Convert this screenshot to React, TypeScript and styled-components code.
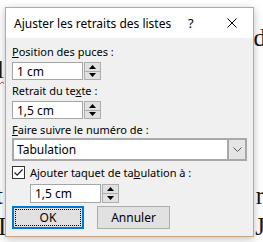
import React from "react";
import styled, { createGlobalStyle } from "styled-components";

const Global = createGlobalStyle`
  html, body { margin: 0; padding: 0; background: #ffffff; overflow: hidden; }
  body { width: 263px; height: 242px; }
`;

const Page = styled.div`
  position: relative;
  width: 263px;
  height: 242px;
  overflow: hidden;
  background: #fff;
`;

const Document = styled.div`
  display: flex;
  flex-direction: column;
  padding-top: 22px;
  font-family: "Liberation Serif", serif;
  font-size: 25px;
  color: #1a1a1a;
`;

const DocLine = styled.div`
  height: 31.5px;
  line-height: 31.5px;
  display: flex;
  justify-content: space-between;
  overflow: hidden;
`;

const LeftFrag = styled.span<{ $shift: number; $squiggle?: boolean }>`
  margin-left: ${(p) => p.$shift}px;
  text-decoration: ${(p) => (p.$squiggle ? "underline wavy #e02020" : "none")};
  text-decoration-thickness: 1px;
  text-underline-offset: 3px;
`;

const RightFrag = styled.span<{ $shift: number }>`
  margin-right: ${(p) => p.$shift}px;
`;

const Dialog = styled.div`
  position: absolute;
  left: 5px;
  top: 7px;
  width: 247px;
  height: 228px;
  border: 1px solid #c9a67f;
  background: #f0f0f0;
  box-shadow: 0 2px 8px rgba(0, 0, 0, 0.25);
  display: flex;
  flex-direction: column;
  font-family: "Noto Sans", sans-serif;
  font-size: 11px;
  color: #000;
`;

const TitleBar = styled.div`
  height: 30px;
  background: #fff;
  display: flex;
  align-items: center;
`;

const Title = styled.div`
  flex: 1;
  padding-left: 8px;
  font-size: 12px;
  white-space: nowrap;
`;

const TitleButton = styled.div<{ $w: number }>`
  width: ${(p) => p.$w}px;
  height: 30px;
  display: flex;
  align-items: center;
  justify-content: center;
  font-size: 13px;
`;

const Body = styled.div`
  display: flex;
  flex-direction: column;
  padding: 6px 6px 0 6px;
`;

const Label = styled.div<{ $mt?: number }>`
  height: 16px;
  line-height: 16px;
  margin-top: ${(p) => p.$mt ?? 0}px;
  white-space: nowrap;
`;

const SpinRow = styled.div<{ $ml?: number; $mt?: number }>`
  display: flex;
  gap: 1px;
  margin-left: ${(p) => p.$ml ?? 0}px;
  margin-top: ${(p) => p.$mt ?? 0}px;
`;

const TextBox = styled.div<{ $h: number }>`
  box-sizing: border-box;
  width: 71px;
  height: ${(p) => p.$h}px;
  border: 1px solid #a5a5a5;
  background: #fff;
  padding-left: 4px;
  font-size: 12px;
  display: flex;
  align-items: center;
`;

const Spinner = styled.div`
  display: flex;
  flex-direction: column;
  width: 17px;
`;

const SpinButton = styled.div`
  flex: 1;
  box-sizing: border-box;
  border: 1px solid #adadad;
  background: #e1e1e1;
  display: flex;
  align-items: center;
  justify-content: center;
  & + & { border-top: none; }
`;

const Select = styled.div`
  box-sizing: border-box;
  width: 235px;
  height: 23px;
  border: 2px solid #a8a8a8;
  background: #fff;
  display: flex;
  align-items: stretch;
`;

const SelectValue = styled.div`
  flex: 1;
  padding-left: 3px;
  font-size: 12px;
  display: flex;
  align-items: center;
`;

const SelectButton = styled.div`
  width: 16px;
  border-left: 2px solid #a8a8a8;
  background: #e5e5e5;
  display: flex;
  align-items: center;
  justify-content: center;
`;

const CheckRow = styled.div`
  display: flex;
  align-items: center;
  gap: 5px;
  margin-top: 3px;
  height: 16px;
`;

const CheckBox = styled.div`
  box-sizing: border-box;
  width: 13px;
  height: 13px;
  border: 1px solid #333;
  background: #fff;
  display: flex;
  align-items: center;
  justify-content: center;
`;

const ButtonRow = styled.div`
  display: flex;
  gap: 13px;
  margin-top: 3px;
`;

const Button = styled.div<{ $default?: boolean }>`
  box-sizing: border-box;
  width: ${(p) => (p.$default ? 72 : 73)}px;
  height: 23px;
  background: #e1e1e1;
  border: ${(p) => (p.$default ? "2px solid #0078d7" : "1px solid #adadad")};
  display: flex;
  align-items: center;
  justify-content: center;
  padding: ${(p) => (p.$default ? "1px" : "0")};
  font-size: 12px;
`;

const FocusRect = styled.div`
  box-sizing: border-box;
  width: 100%;
  height: 100%;
  border: 1px dotted #000;
  display: flex;
  align-items: center;
  justify-content: center;
`;

const Up = () => (
  <svg width="7" height="4" viewBox="0 0 7 4"><path d="M3.5 0 L7 4 L0 4 Z" fill="#000" /></svg>
);
const Down = () => (
  <svg width="7" height="4" viewBox="0 0 7 4"><path d="M0 0 L7 0 L3.5 4 Z" fill="#000" /></svg>
);

const Spin: React.FC<{ value: string; h: number; ml?: number; mt?: number }> = ({ value, h, ml, mt }) => (
  <SpinRow $ml={ml} $mt={mt}>
    <TextBox $h={h}>{value}</TextBox>
    <Spinner>
      <SpinButton><Up /></SpinButton>
      <SpinButton><Down /></SpinButton>
    </Spinner>
  </SpinRow>
);

export default function App() {
  return (
    <Page>
      <Global />
      <Document>
        <DocLine><LeftFrag $shift={-9}>r</LeftFrag><RightFrag $shift={-3}>d</RightFrag></DocLine>
        <DocLine><LeftFrag $shift={-3} $squiggle>l</LeftFrag><RightFrag $shift={0}> </RightFrag></DocLine>
        <DocLine><span /><span /></DocLine>
        <DocLine><span /><span /></DocLine>
        <DocLine><span /><span /></DocLine>
        <DocLine><LeftFrag $shift={-4}>t</LeftFrag><RightFrag $shift={-1}>r</RightFrag></DocLine>
        <DocLine><LeftFrag $shift={-2}>I</LeftFrag><RightFrag $shift={-2}>J</RightFrag></DocLine>
      </Document>
      <Dialog>
        <TitleBar>
          <Title>Ajuster les retraits des listes</Title>
          <TitleButton $w={42}>?</TitleButton>
          <TitleButton $w={46}>
            <svg width="10" height="10" viewBox="0 0 10 10">
              <path d="M0.5 0.5 L9.5 9.5 M9.5 0.5 L0.5 9.5" stroke="#000" strokeWidth="1" />
            </svg>
          </TitleButton>
        </TitleBar>
        <Body>
          <Label><u>P</u>osition des puces :</Label>
          <Spin value="1 cm" h={18} mt={2} />
          <Label $mt={3}>Retrait du te<u>x</u>te :</Label>
          <Spin value="1,5 cm" h={18} mt={2} />
          <Label $mt={3}><u>F</u>aire suivre le numéro de :</Label>
          <Select>
            <SelectValue>Tabulation</SelectValue>
            <SelectButton>
              <svg width="9" height="5" viewBox="0 0 9 5">
                <path d="M0.5 0.5 L4.5 4.5 L8.5 0.5" stroke="#555" strokeWidth="1" fill="none" />
              </svg>
            </SelectButton>
          </Select>
          <CheckRow>
            <CheckBox>
              <svg width="11" height="11" viewBox="0 0 11 11">
                <path d="M1.5 5.5 L4.2 8.2 L9.5 2.5" stroke="#222" strokeWidth="1.2" fill="none" />
              </svg>
            </CheckBox>
            <span>Ajouter taquet de ta<u>b</u>ulation à :</span>
          </CheckRow>
          <Spin value="1,5 cm" h={19} ml={18} mt={4} />
          <ButtonRow>
            <Button $default><FocusRect>OK</FocusRect></Button>
            <Button>Annuler</Button>
          </ButtonRow>
        </Body>
      </Dialog>
    </Page>
  );
}
